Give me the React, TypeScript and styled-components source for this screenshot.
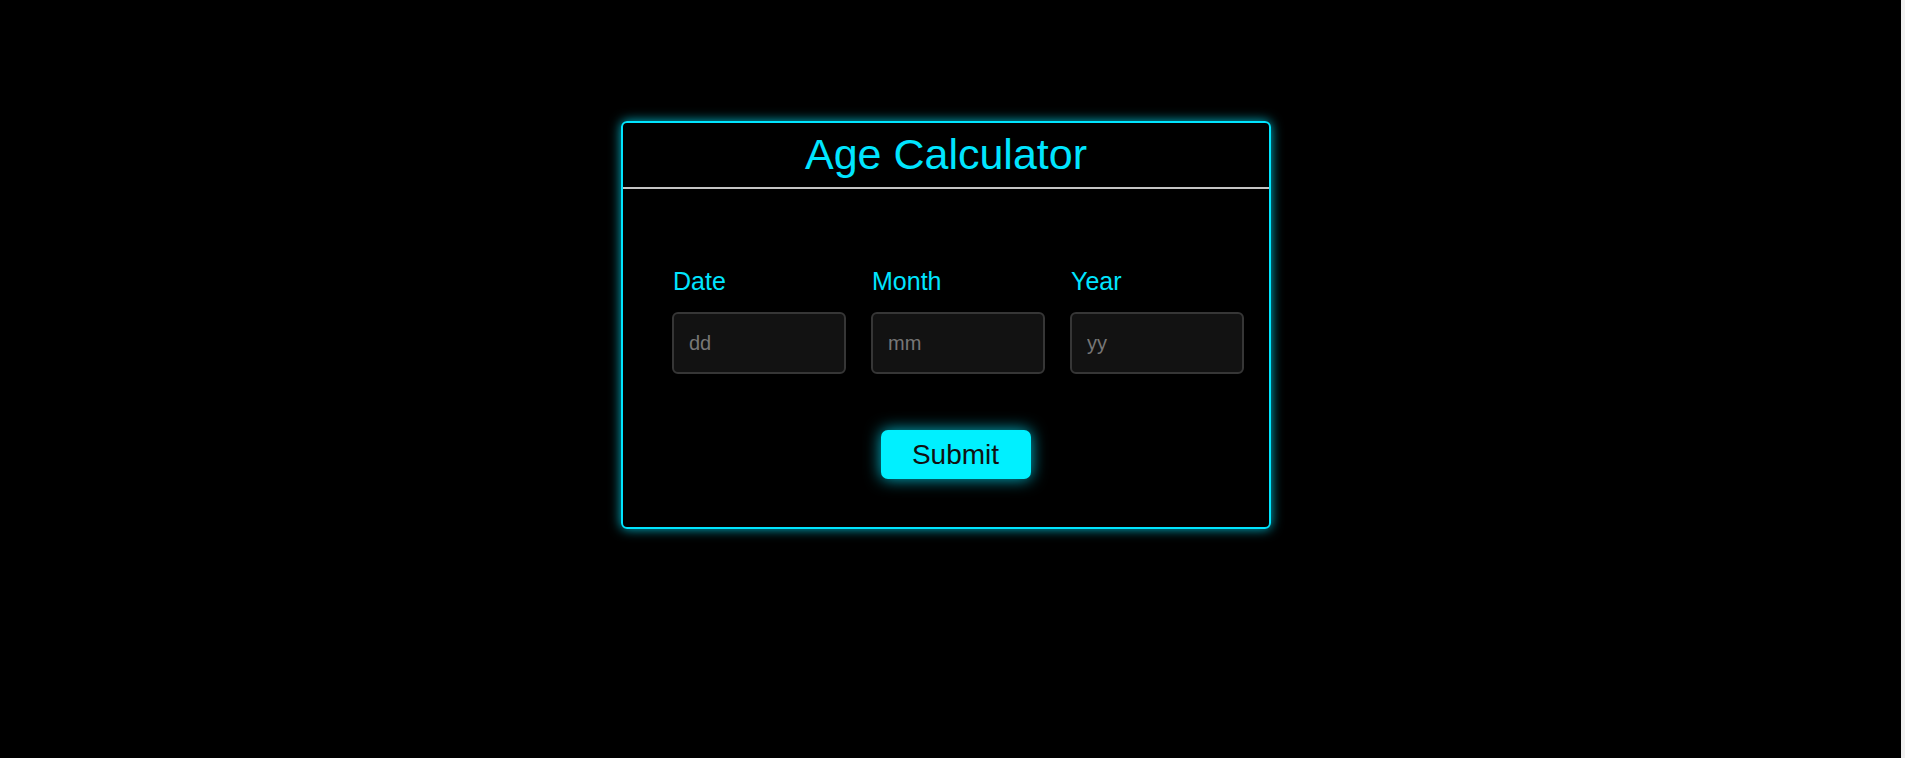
import styled, { createGlobalStyle } from 'styled-components';

const GlobalStyle = createGlobalStyle`
  html, body {
    margin: 0;
    padding: 0;
    background: #f1f1f1;
  }
  body {
    font-family: 'Liberation Sans', Arial, sans-serif;
  }
`;

const Page = styled.main`
  min-height: 758px;
  margin-right: 4px;
  background: #000;
  display: flex;
  justify-content: center;
  align-items: flex-start;
  padding: 121px 9px 0 0;
  box-sizing: border-box;
`;

const Card = styled.section`
  width: 650px;
  box-sizing: border-box;
  border: 2px solid #00e5ff;
  border-radius: 6px;
  box-shadow: 0 0 12px rgba(0, 229, 255, 0.8);
`;

const Header = styled.header`
  padding: 7px 0 8px;
  border-bottom: 2px solid #c4c4c4;
  text-align: center;
`;

const Title = styled.h1`
  margin: 0;
  font-size: 43px;
  font-weight: 400;
  color: #00e5ff;
`;

const Body = styled.form`
  padding: 78px 25px 48px 49px;
  display: flex;
  flex-direction: column;
  align-items: center;
`;

const Fields = styled.div`
  align-self: stretch;
  display: flex;
  gap: 25px;
`;

const Field = styled.label`
  display: flex;
  flex-direction: column;
  gap: 17px;
`;

const FieldLabel = styled.span`
  font-size: 25px;
  line-height: 28px;
  color: #00e5ff;
  padding-left: 1px;
`;

const Input = styled.input`
  width: 174px;
  height: 62px;
  box-sizing: border-box;
  padding: 0 15px;
  background: #121212;
  border: 2px solid #363636;
  border-radius: 6px;
  color: #ddd;
  font-family: 'Liberation Sans', Arial, sans-serif;
  font-size: 20px;
  outline: none;
  &::placeholder {
    color: #777;
  }
`;

const Submit = styled.button`
  margin: 56px 5px 0 0;
  width: 150px;
  height: 49px;
  border: none;
  border-radius: 7px;
  background: #00f0ff;
  color: #111;
  font-family: 'Liberation Sans', Arial, sans-serif;
  font-size: 28px;
  box-shadow: 0 0 16px rgba(0, 229, 255, 0.8);
  cursor: pointer;
`;

const fields = [
  { label: 'Date', placeholder: 'dd' },
  { label: 'Month', placeholder: 'mm' },
  { label: 'Year', placeholder: 'yy' },
];

const App = () => {
  return (
    <>
      <GlobalStyle />
      <Page>
        <Card>
          <Header>
            <Title>Age Calculator</Title>
          </Header>
          <Body onSubmit={e => e.preventDefault()}>
            <Fields>
              {fields.map(f => (
                <Field key={f.label}>
                  <FieldLabel>{f.label}</FieldLabel>
                  <Input type="text" placeholder={f.placeholder} />
                </Field>
              ))}
            </Fields>
            <Submit type="submit">Submit</Submit>
          </Body>
        </Card>
      </Page>
    </>
  );
};

export default App;
